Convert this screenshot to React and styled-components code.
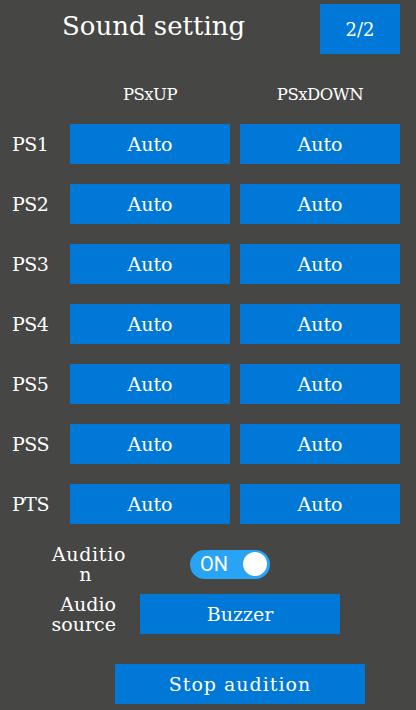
import React from "react";
import styled, { createGlobalStyle } from "styled-components";

const Global = createGlobalStyle`
  html, body { margin: 0; padding: 0; background: #464644; }
  #root { width: 416px; height: 710px; }
`;

const Page = styled.div`
  width: 416px;
  height: 710px;
  background: #464644;
  color: #ffffff;
  font-family: "DejaVu Serif", "Liberation Serif", serif;
  font-size: 19px;
  display: flex;
  flex-direction: column;
  overflow: hidden;
`;

const Header = styled.div`
  display: flex;
  align-items: flex-start;
  height: 58px;
  padding-top: 4px;
  box-sizing: border-box;
`;

const Title = styled.div`
  margin-left: 62px;
  margin-top: 5px;
  font-size: 26px;
  line-height: 34px;
`;

const BlueButton = styled.div`
  display: flex;
  align-items: center;
  justify-content: center;
  background: #0078d7;
  color: #fff;
  width: ${(p) => p.$w}px;
  height: ${(p) => p.$h || 40}px;
  margin-left: ${(p) => p.$ml || 0}px;
  letter-spacing: ${(p) => p.$ls || 0}px;
  box-sizing: border-box;
  flex-shrink: 0;
`;

const PageButton = styled(BlueButton)`
  margin-left: auto;
  margin-right: 16px;
  font-size: 18px;
`;

const Grid = styled.div`
  display: grid;
  grid-template-columns: 48px 160px 160px;
  grid-template-rows: 20px repeat(7, 40px);
  column-gap: 10px;
  row-gap: 20px;
  padding-left: 12px;
  margin-top: 26px;
`;

const ColHead = styled.div`
  text-align: center;
  font-size: 16.5px;
  letter-spacing: -0.5px;
  line-height: 20px;
  padding-top: 1px;
`;

const RowLabel = styled.div`
  display: flex;
  align-items: center;
  letter-spacing: -0.5px;
`;

const Row = styled.div`
  display: flex;
  align-items: center;
  margin-top: ${(p) => p.$mt}px;
`;

const Label = styled.div`
  width: ${(p) => p.$w}px;
  margin-left: 51px;
  text-align: ${(p) => p.$align};
  white-space: pre;
  line-height: 20px;
  letter-spacing: ${(p) => p.$ls || 0}px;
  flex-shrink: 0;
`;

const Toggle = styled.div`
  position: relative;
  width: 80px;
  height: 29px;
  border-radius: 15px;
  background: #29a3f4;
  margin-left: 63px;
  display: flex;
  align-items: center;
  padding-left: 10px;
  box-sizing: border-box;
  font-family: Roboto, "Noto Sans", sans-serif;
  font-size: 20px;
  color: #fff;
`;

const Knob = styled.div`
  position: absolute;
  right: 3px;
  top: 2.5px;
  width: 24px;
  height: 24px;
  border-radius: 50%;
  background: #fff;
`;

const rows = ["PS1", "PS2", "PS3", "PS4", "PS5", "PSS", "PTS"];

export default function App() {
  return (
    <Page>
      <Global />
      <Header>
        <Title>Sound setting</Title>
        <PageButton $w={80} $h={50}>2/2</PageButton>
      </Header>
      <Grid>
        <div />
        <ColHead>PSxUP</ColHead>
        <ColHead>PSxDOWN</ColHead>
        {rows.map((r) => (
          <React.Fragment key={r}>
            <RowLabel>{r}</RowLabel>
            <BlueButton $w={160}>Auto</BlueButton>
            <BlueButton $w={160}>Auto</BlueButton>
          </React.Fragment>
        ))}
      </Grid>
      <Row $mt={20}>
        <Label $w={76} $align="center" $ls={0.7}>{"Auditio\nn "}</Label>
        <Toggle>
          ON
          <Knob />
        </Toggle>
      </Row>
      <Row $mt={10}>
        <Label $w={65} $align="right">{"Audio\nsource"}</Label>
        <BlueButton $w={200} $ml={24}>Buzzer</BlueButton>
      </Row>
      <Row $mt={30}>
        <BlueButton $w={250} $ml={115} $ls={1}>Stop audition</BlueButton>
      </Row>
    </Page>
  );
}
